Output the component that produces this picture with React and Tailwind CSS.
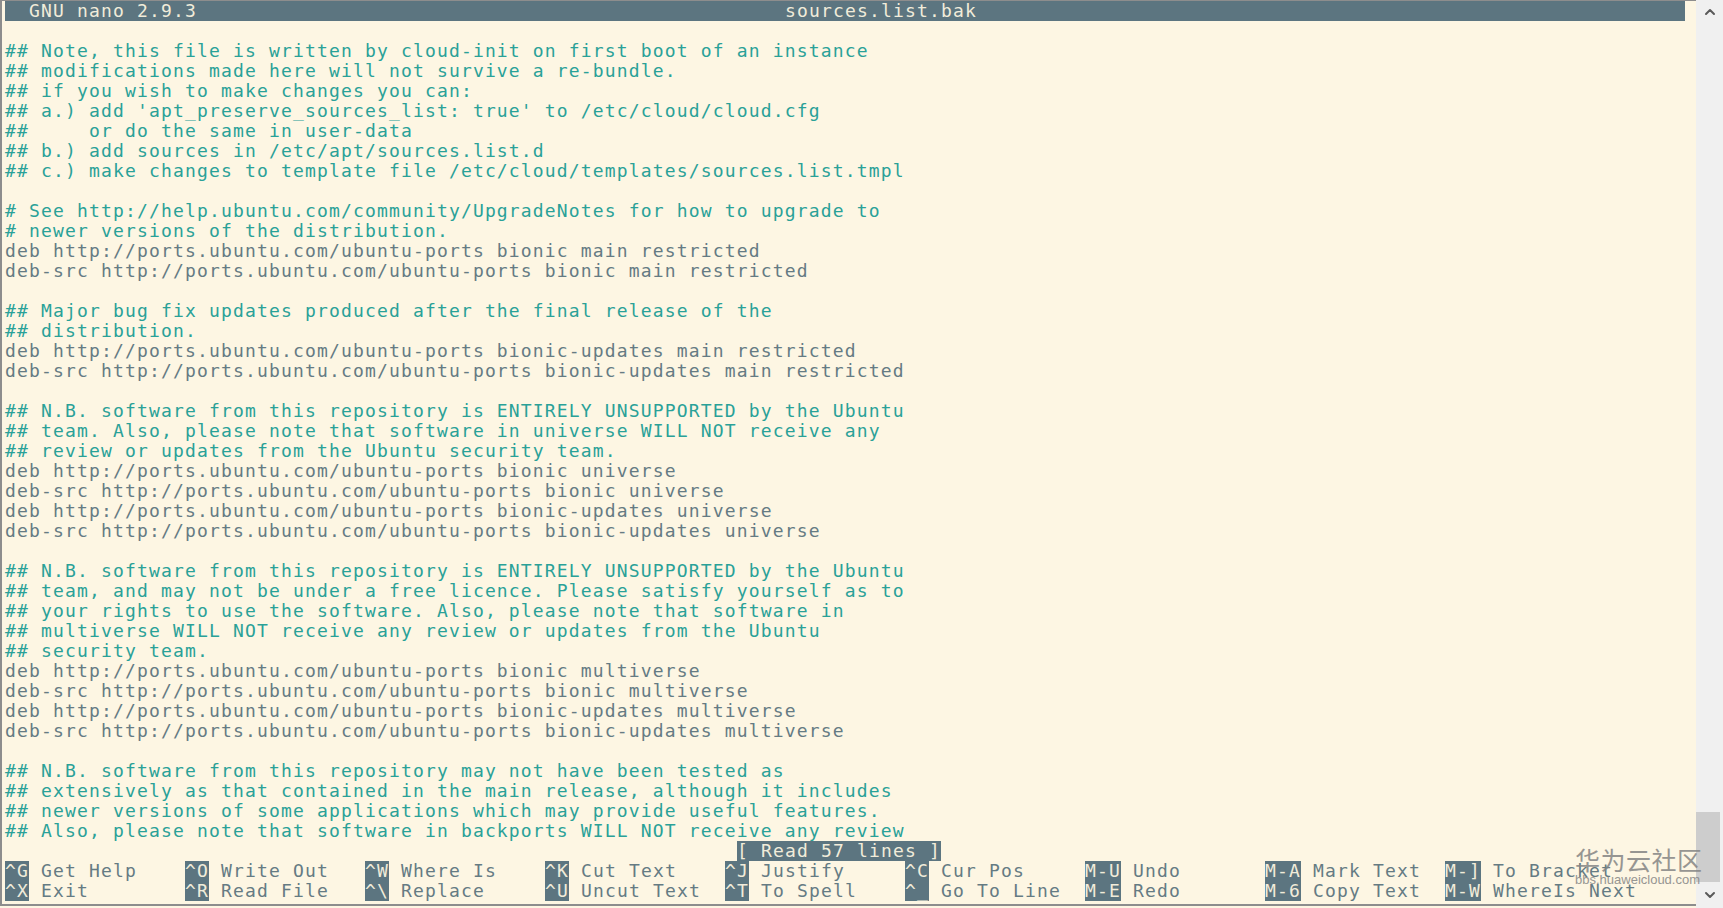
import { ChevronUp, ChevronDown } from "lucide-react";

const LINES = [
  "## Note, this file is written by cloud-init on first boot of an instance",
  "## modifications made here will not survive a re-bundle.",
  "## if you wish to make changes you can:",
  "## a.) add 'apt_preserve_sources_list: true' to /etc/cloud/cloud.cfg",
  "##     or do the same in user-data",
  "## b.) add sources in /etc/apt/sources.list.d",
  "## c.) make changes to template file /etc/cloud/templates/sources.list.tmpl",
  "",
  "# See http://help.ubuntu.com/community/UpgradeNotes for how to upgrade to",
  "# newer versions of the distribution.",
  "deb http://ports.ubuntu.com/ubuntu-ports bionic main restricted",
  "deb-src http://ports.ubuntu.com/ubuntu-ports bionic main restricted",
  "",
  "## Major bug fix updates produced after the final release of the",
  "## distribution.",
  "deb http://ports.ubuntu.com/ubuntu-ports bionic-updates main restricted",
  "deb-src http://ports.ubuntu.com/ubuntu-ports bionic-updates main restricted",
  "",
  "## N.B. software from this repository is ENTIRELY UNSUPPORTED by the Ubuntu",
  "## team. Also, please note that software in universe WILL NOT receive any",
  "## review or updates from the Ubuntu security team.",
  "deb http://ports.ubuntu.com/ubuntu-ports bionic universe",
  "deb-src http://ports.ubuntu.com/ubuntu-ports bionic universe",
  "deb http://ports.ubuntu.com/ubuntu-ports bionic-updates universe",
  "deb-src http://ports.ubuntu.com/ubuntu-ports bionic-updates universe",
  "",
  "## N.B. software from this repository is ENTIRELY UNSUPPORTED by the Ubuntu",
  "## team, and may not be under a free licence. Please satisfy yourself as to",
  "## your rights to use the software. Also, please note that software in",
  "## multiverse WILL NOT receive any review or updates from the Ubuntu",
  "## security team.",
  "deb http://ports.ubuntu.com/ubuntu-ports bionic multiverse",
  "deb-src http://ports.ubuntu.com/ubuntu-ports bionic multiverse",
  "deb http://ports.ubuntu.com/ubuntu-ports bionic-updates multiverse",
  "deb-src http://ports.ubuntu.com/ubuntu-ports bionic-updates multiverse",
  "",
  "## N.B. software from this repository may not have been tested as",
  "## extensively as that contained in the main release, although it includes",
  "## newer versions of some applications which may provide useful features.",
  "## Also, please note that software in backports WILL NOT receive any review",
];

const SHORTCUTS = [
  [
    ["^G", "Get Help"],
    ["^O", "Write Out"],
    ["^W", "Where Is"],
    ["^K", "Cut Text"],
    ["^J", "Justify"],
    ["^C", "Cur Pos"],
    ["M-U", "Undo"],
    ["M-A", "Mark Text"],
    ["M-]", "To Bracket"],
  ],
  [
    ["^X", "Exit"],
    ["^R", "Read File"],
    ["^\\", "Replace"],
    ["^U", "Uncut Text"],
    ["^T", "To Spell"],
    ["^_", "Go To Line"],
    ["M-E", "Redo"],
    ["M-6", "Copy Text"],
    ["M-W", "WhereIs Next"],
  ],
];

function ShortcutRow({ items }) {
  return (
    <div className="flex h-[20px] items-center">
      {items.map(([key, label]) => (
        <div key={key} className="flex h-[20px] w-[180px] shrink-0 items-center whitespace-pre">
          <span className="flex h-[20px] items-center bg-[#5c7580] text-[#f1ecda]">{key}</span>
          <span className="text-[#657b83]">{" " + label}</span>
        </div>
      ))}
    </div>
  );
}

export default function App() {
  return (
    <div className="relative flex h-[908px] w-[1723px] overflow-hidden bg-[#fdf6e3]">
      <div
        className="flex h-[906px] w-[1696px] shrink-0 flex-col border-t border-b-2 border-l-2 border-[#8d8d8d] pl-[3px] text-[18px] leading-[20px] tracking-[1.16px]"
        style={{ fontFamily: '"DejaVu Sans Mono", "Liberation Mono", monospace' }}
      >
        <div className="flex h-[20px] w-[1680px] items-center whitespace-pre bg-[#5c7580] text-[#f1ecda]">
          <span className="w-[780px] shrink-0">{"  GNU nano 2.9.3"}</span>
          <span>sources.list.bak</span>
        </div>
        <div className="h-[20px]" />
        {LINES.map((line, i) => (
          <div
            key={i}
            className={
              "flex h-[20px] items-center whitespace-pre " +
              (line.startsWith("#") ? "text-[#2aa198]" : "text-[#657b83]")
            }
          >
            {line}
          </div>
        ))}
        <div className="flex h-[20px] items-center whitespace-pre">
          <span className="ml-[732px] flex h-[20px] items-center bg-[#5c7580] text-[#f1ecda]">
            {"[ Read 57 lines ]"}
          </span>
        </div>
        <ShortcutRow items={SHORTCUTS[0]} />
        <ShortcutRow items={SHORTCUTS[1]} />
      </div>

      <div className="flex w-[27px] shrink-0 flex-col items-stretch bg-[#f0f0f0]">
        <div className="flex h-[24px] items-center justify-center text-[#5a5a5a]">
          <ChevronUp size={16} strokeWidth={3} />
        </div>
        <div className="flex-1" />
        <div className="mr-[3px] h-[70px] bg-[#cdcdcd]" />
        <div className="flex h-[26px] items-center justify-center text-[#5a5a5a]">
          <ChevronDown size={16} strokeWidth={3} />
        </div>
      </div>

      <div className="pointer-events-none absolute left-[1575px] top-[845px] flex flex-col items-start opacity-85">
        <span
          className="text-[25px] leading-[28px] tracking-[0.5px] text-[#858585]"
          style={{ fontFamily: '"Noto Sans CJK SC", sans-serif' }}
        >
          华为云社区
        </span>
        <span
          className="text-[13px] leading-[14px] text-[#858585]"
          style={{ fontFamily: '"Liberation Sans", Arial, sans-serif' }}
        >
          bbs.huaweicloud.com
        </span>
      </div>
    </div>
  );
}
